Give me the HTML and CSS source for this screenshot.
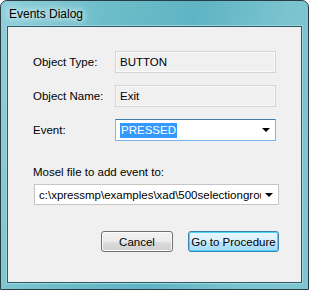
FILE: index.html
```html
<!DOCTYPE html>
<html lang="en">
<head>
  <meta charset="UTF-8" />
  <title>Events Dialog</title>
  <link rel="stylesheet" href="styles.css">
</head>
<body>
  <div class="window">
    <div class="titlebar">Events Dialog</div>
    <div class="client">
      <div class="row">
        <span class="label">Object Type:</span>
        <div class="field readonly">BUTTON</div>
      </div>
      <div class="row">
        <span class="label">Object Name:</span>
        <div class="field readonly">Exit</div>
      </div>
      <div class="row">
        <span class="label">Event:</span>
        <div class="field combo focused">
          <span class="sel">PRESSED</span>
          <span class="arrow"></span>
        </div>
      </div>

      <div class="mosel-label">Mosel file to add event to:</div>
      <div class="combo mosel">
        <span class="path">c:\xpressmp\examples\xad\500selectiongroup</span>
        <span class="arrow"></span>
      </div>

      <div class="buttons">
        <button class="btn">Cancel</button>
        <button class="btn default">Go to Procedure</button>
      </div>
    </div>
  </div>
</body>
</html>
```

FILE: styles.css
```css
body { margin: 0; font-family: "Liberation Sans", Arial, sans-serif; font-size: 11.5px; color: #000; }

.window {
  width: 309px; height: 290px; box-sizing: border-box;
  border: 1px solid #2b3d44; border-radius: 7px 7px 0 0;
  background: linear-gradient(100deg, #8fd0da 0%, #6dbdc9 30%, #5fb4c4 55%, #7ac3cf 80%, #7fc6d2 100%);
  display: flex; flex-direction: column;
  padding: 0 6px 6px 6px;
}
.titlebar {
  height: 25px; line-height: 26px; padding-left: 2px; font-size: 12px;
  text-shadow: 0 0 6px #fff, 0 0 10px #fff;
}
.client {
  flex: 1; background: #f0f0f0;
  border: 1px solid #285c68;
  box-shadow: 0 0 0 1px #9fd4de;
  padding: 24px 0 0 25px;
}

.row { display: flex; align-items: center; height: 22px; margin-bottom: 12px; }
.label { width: 82px; }
.field {
  width: 161px; height: 22px; box-sizing: border-box;
  display: flex; align-items: center; padding-left: 4px;
}
.readonly {
  border: 1px solid #d4d4d4; box-shadow: inset 0 0 0 1px #fafafa;
  background: #f0f0f0;
}
.combo { position: relative; background: #fff; }
.focused { border: 1px solid #7eb4ea; border-top-color: #3d7bad; }
.sel { background: #3399ff; color: #fff; padding: 0 1px; line-height: 15px; }
.arrow {
  position: absolute; right: 5px; top: 50%; margin-top: -2px;
  border-left: 4px solid transparent; border-right: 4px solid transparent;
  border-top: 4px solid #000;
}

.mosel-label { margin-top: 25px; height: 18px; }
.mosel {
  margin-left: 1px;
  width: 245px; height: 21px; box-sizing: border-box;
  border: 1px solid #c6c6c6; display: flex; align-items: center;
  padding-left: 4px;
}
.path { white-space: nowrap; overflow: hidden; width: 222px; }

.buttons { display: flex; gap: 15px; margin-top: 26px; margin-left: 68px; }
.btn {
  font: inherit; color: #000; height: 21px; padding: 0; white-space: nowrap;
  border: 1px solid #707070; border-radius: 3px;
  background: linear-gradient(#f2f2f2 0%, #ebebeb 50%, #dddddd 51%, #cfcfcf 100%);
  box-shadow: inset 0 0 0 1px #fcfcfc;
  width: 72px;
}
.btn.default {
  width: 91px;
  border-color: #3c7fb1;
  background: linear-gradient(#eaf6fd 0%, #d9f0fc 50%, #bee6fd 51%, #a7d9f5 100%);
  box-shadow: inset 0 0 0 1px #48d8fb;
}
```
